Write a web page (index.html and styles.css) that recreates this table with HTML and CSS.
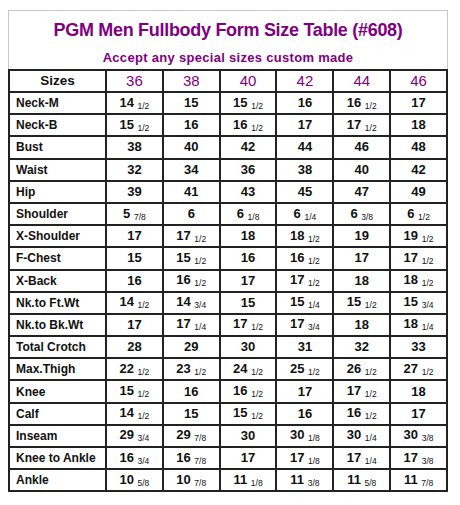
FILE: index.html
```html
<!DOCTYPE html>
<html>
<head>
<meta charset="utf-8">
<link rel="stylesheet" href="styles.css">
</head>
<body>
<div class="sheet">
  <div class="head">
    <h1 class="title">PGM Men Fullbody Form Size Table (#608)</h1>
    <p class="sub">Accept any special sizes custom made</p>
  </div>
  <table class="sizes">
    <colgroup><col class="c-label"><col><col><col><col><col><col></colgroup>
    <thead>
      <tr><th class="lab">Sizes</th><th>36</th><th>38</th><th>40</th><th>42</th><th>44</th><th>46</th></tr>
    </thead>
    <tbody>
      <tr><td class="lab">Neck-M</td><td>14 <span class="fr">1/2</span></td><td>15</td><td>15 <span class="fr">1/2</span></td><td>16</td><td>16 <span class="fr">1/2</span></td><td>17</td></tr>
      <tr><td class="lab">Neck-B</td><td>15 <span class="fr">1/2</span></td><td>16</td><td>16 <span class="fr">1/2</span></td><td>17</td><td>17 <span class="fr">1/2</span></td><td>18</td></tr>
      <tr><td class="lab">Bust</td><td>38</td><td>40</td><td>42</td><td>44</td><td>46</td><td>48</td></tr>
      <tr><td class="lab">Waist</td><td>32</td><td>34</td><td>36</td><td>38</td><td>40</td><td>42</td></tr>
      <tr><td class="lab">Hip</td><td>39</td><td>41</td><td>43</td><td>45</td><td>47</td><td>49</td></tr>
      <tr><td class="lab">Shoulder</td><td>5 <span class="fr">7/8</span></td><td>6</td><td>6 <span class="fr">1/8</span></td><td>6 <span class="fr">1/4</span></td><td>6 <span class="fr">3/8</span></td><td>6 <span class="fr">1/2</span></td></tr>
      <tr><td class="lab">X-Shoulder</td><td>17</td><td>17 <span class="fr">1/2</span></td><td>18</td><td>18 <span class="fr">1/2</span></td><td>19</td><td>19 <span class="fr">1/2</span></td></tr>
      <tr><td class="lab">F-Chest</td><td>15</td><td>15 <span class="fr">1/2</span></td><td>16</td><td>16 <span class="fr">1/2</span></td><td>17</td><td>17 <span class="fr">1/2</span></td></tr>
      <tr><td class="lab">X-Back</td><td>16</td><td>16 <span class="fr">1/2</span></td><td>17</td><td>17 <span class="fr">1/2</span></td><td>18</td><td>18 <span class="fr">1/2</span></td></tr>
      <tr><td class="lab">Nk.to Ft.Wt</td><td>14 <span class="fr">1/2</span></td><td>14 <span class="fr">3/4</span></td><td>15</td><td>15 <span class="fr">1/4</span></td><td>15 <span class="fr">1/2</span></td><td>15 <span class="fr">3/4</span></td></tr>
      <tr><td class="lab">Nk.to Bk.Wt</td><td>17</td><td>17 <span class="fr">1/4</span></td><td>17 <span class="fr">1/2</span></td><td>17 <span class="fr">3/4</span></td><td>18</td><td>18 <span class="fr">1/4</span></td></tr>
      <tr><td class="lab">Total Crotch</td><td>28</td><td>29</td><td>30</td><td>31</td><td>32</td><td>33</td></tr>
      <tr><td class="lab">Max.Thigh</td><td>22 <span class="fr">1/2</span></td><td>23 <span class="fr">1/2</span></td><td>24 <span class="fr">1/2</span></td><td>25 <span class="fr">1/2</span></td><td>26 <span class="fr">1/2</span></td><td>27 <span class="fr">1/2</span></td></tr>
      <tr><td class="lab">Knee</td><td>15 <span class="fr">1/2</span></td><td>16</td><td>16 <span class="fr">1/2</span></td><td>17</td><td>17 <span class="fr">1/2</span></td><td>18</td></tr>
      <tr><td class="lab">Calf</td><td>14 <span class="fr">1/2</span></td><td>15</td><td>15 <span class="fr">1/2</span></td><td>16</td><td>16 <span class="fr">1/2</span></td><td>17</td></tr>
      <tr><td class="lab">Inseam</td><td>29 <span class="fr">3/4</span></td><td>29 <span class="fr">7/8</span></td><td>30</td><td>30 <span class="fr">1/8</span></td><td>30 <span class="fr">1/4</span></td><td>30 <span class="fr">3/8</span></td></tr>
      <tr><td class="lab">Knee to Ankle</td><td>16 <span class="fr">3/4</span></td><td>16 <span class="fr">7/8</span></td><td>17</td><td>17 <span class="fr">1/8</span></td><td>17 <span class="fr">1/4</span></td><td>17 <span class="fr">3/8</span></td></tr>
      <tr><td class="lab">Ankle</td><td>10 <span class="fr">5/8</span></td><td>10 <span class="fr">7/8</span></td><td>11 <span class="fr">1/8</span></td><td>11 <span class="fr">3/8</span></td><td>11 <span class="fr">5/8</span></td><td>11 <span class="fr">7/8</span></td></tr>
    </tbody>
  </table>
</div>
</body>
</html>
```
FILE: styles.css
```css
html, body {
  margin: 0;
  padding: 0;
  background: #fff;
}
body {
  font-family: "Liberation Sans", Arial, sans-serif;
  color: #111;
}
.sheet {
  margin: 10px 0 0 8px;
  width: 440px;
}
.head {
  box-sizing: border-box;
  height: 59px;
  border: 1px solid #c8c8c8;
  border-bottom: none;
  text-align: center;
  color: #800080;
}
.title {
  margin: 0;
  padding-top: 9px;
  font-size: 18px;
  line-height: 21px;
  letter-spacing: -0.3px;
  font-weight: bold;
}
.sub {
  margin: 0;
  padding-top: 9px;
  font-size: 13px;
  line-height: 16px;
  letter-spacing: 0.3px;
  font-weight: bold;
}
.sizes {
  width: 440px;
  border-collapse: collapse;
  table-layout: fixed;
  border: 2px solid #222;
}
.c-label {
  width: 97px;
}
.sizes th,
.sizes td {
  border: 2px solid #222;
  height: 20px;
  padding: 0;
  text-align: center;
  vertical-align: middle;
  font-weight: bold;
  font-size: 13px;
  line-height: 16px;
  white-space: nowrap;
}
.sizes th {
  font-weight: normal;
  font-size: 15px;
  color: #800080;
}
.sizes th.lab {
  font-weight: bold;
  font-size: 13.5px;
  color: #111;
}
.sizes td.lab {
  text-align: left;
  padding-left: 6px;
  font-size: 12px;
}
.sizes tbody td {
  height: 20.2px;
}
.fr {
  font-size: 8.5px;
  font-weight: normal;
  position: relative;
  top: 2px;
}
```
